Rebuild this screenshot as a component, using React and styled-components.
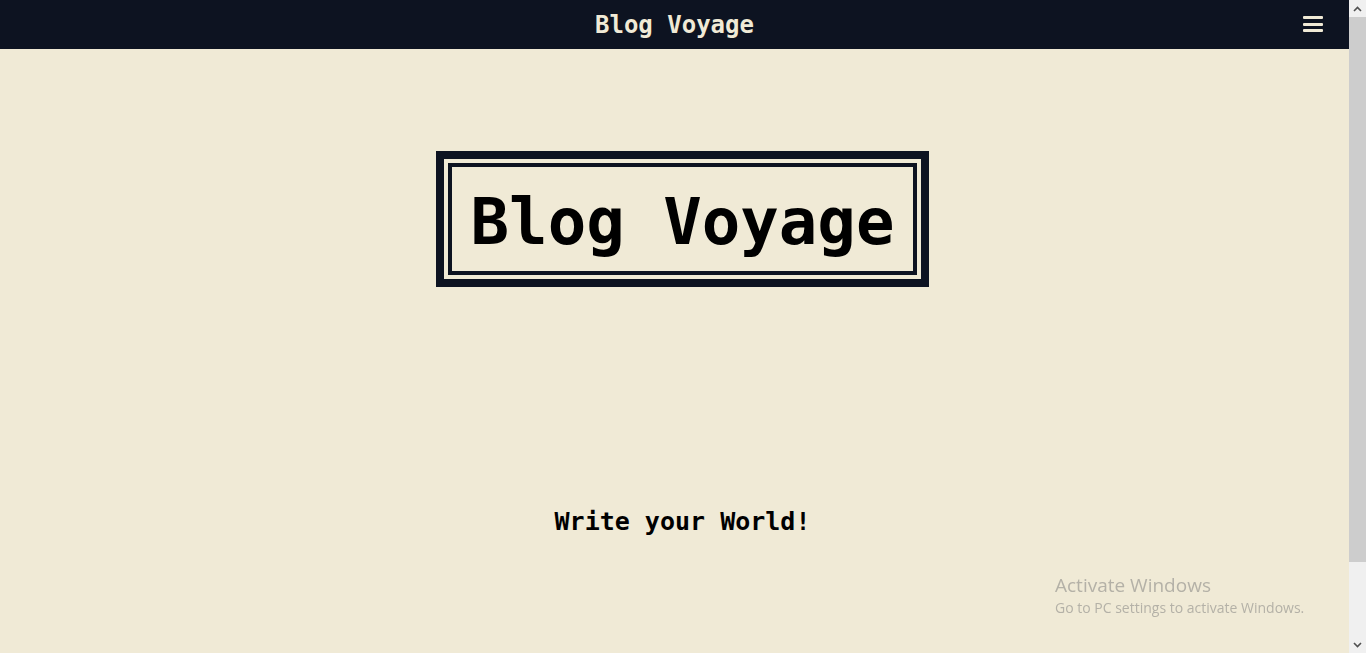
import React from 'react'
import styled, { createGlobalStyle } from 'styled-components'

const ink = '#0d1321'
const cream = '#f0ead6'
const mono = `"DejaVu Sans Mono", "Liberation Mono", monospace`

const GlobalStyle = createGlobalStyle`
  html, body {
    margin: 0;
    padding: 0;
    background: ${cream};
    overflow: hidden;
  }
  body {
    font-family: ${mono};
  }
`

const Shell = styled.div`
  display: flex;
  height: 100vh;
  overflow: hidden;
`

const Page = styled.div`
  flex: 1;
  min-width: 0;
  overflow: hidden;
  background: ${cream};
`

const ScrollBar = styled.div`
  width: 17px;
  flex: none;
  display: flex;
  flex-direction: column;
  background: #f0f0f0;
`

const ScrollArrow = styled.div`
  height: 17px;
  flex: none;
  display: flex;
  align-items: center;
  justify-content: center;
`

const ScrollTrack = styled.div`
  flex: 1;
`

const ScrollThumb = styled.div`
  height: 545px;
  background: #cdcdcd;
`

const Navbar = styled.header`
  height: 49px;
  background: ${ink};
  display: grid;
  grid-template-columns: 1fr auto 1fr;
  align-items: center;
  padding: 0 26px;
`

const Brand = styled.div`
  grid-column: 2;
  color: ${cream};
  font-family: ${mono};
  font-weight: 700;
  font-size: 24px;
  line-height: 28px;
`

const MenuButton = styled.button`
  grid-column: 3;
  justify-self: end;
  display: flex;
  flex-direction: column;
  gap: 3.5px;
  padding: 0;
  margin: 0 0 1px;
  border: 0;
  background: none;
  cursor: pointer;
`

const MenuBar = styled.span`
  display: block;
  width: 20px;
  height: 3px;
  border-radius: 1px;
  background: ${cream};
`

const Main = styled.main`
  min-height: 693px;
  box-sizing: border-box;
  padding-left: 16px;
  display: flex;
  flex-direction: column;
  align-items: center;
`

const OuterFrame = styled.div`
  margin-top: 102px;
  border: 8px solid ${ink};
  padding: 4px;
`

const InnerFrame = styled.div`
  border: 4px solid ${ink};
  padding: 18px 19px 12px;
`

const Title = styled.h1`
  margin: 0;
  font-family: ${mono};
  font-weight: 700;
  font-size: 64px;
  color: #000;
  white-space: nowrap;
`

const Tagline = styled.p`
  margin: 220px 0 0;
  font-family: ${mono};
  font-weight: 700;
  font-size: 25px;
  color: #000;
`

const Watermark = styled.div`
  position: fixed;
  left: 1055px;
  top: 572px;
  font-family: "Open Sans", "Noto Sans", sans-serif;
  color: #b4b1a7;
  pointer-events: none;
`

const WatermarkTitle = styled.div`
  font-size: 19px;
  line-height: 26px;
`

const WatermarkText = styled.div`
  font-size: 14px;
  line-height: 19px;
`

const Chevron = ({ up }) => (
  <svg width="9" height="6" viewBox="0 0 9 6">
    <path
      d={up ? 'M1 5 L4.5 1.5 L8 5' : 'M1 1 L4.5 4.5 L8 1'}
      fill="none"
      stroke="#505050"
      strokeWidth="1.6"
    />
  </svg>
)

export default function App() {
  return (
    <>
      <GlobalStyle />
      <Shell>
        <Page>
          <Navbar>
            <Brand>Blog Voyage</Brand>
            <MenuButton aria-label="menu">
              <MenuBar />
              <MenuBar />
              <MenuBar />
            </MenuButton>
          </Navbar>
          <Main>
            <OuterFrame>
              <InnerFrame>
                <Title>Blog Voyage</Title>
              </InnerFrame>
            </OuterFrame>
            <Tagline>Write your World!</Tagline>
          </Main>
        </Page>
        <ScrollBar>
          <ScrollArrow>
            <Chevron up />
          </ScrollArrow>
          <ScrollTrack>
            <ScrollThumb />
          </ScrollTrack>
          <ScrollArrow>
            <Chevron />
          </ScrollArrow>
        </ScrollBar>
      </Shell>
      <Watermark>
        <WatermarkTitle>Activate Windows</WatermarkTitle>
        <WatermarkText>Go to PC settings to activate Windows.</WatermarkText>
      </Watermark>
    </>
  )
}
